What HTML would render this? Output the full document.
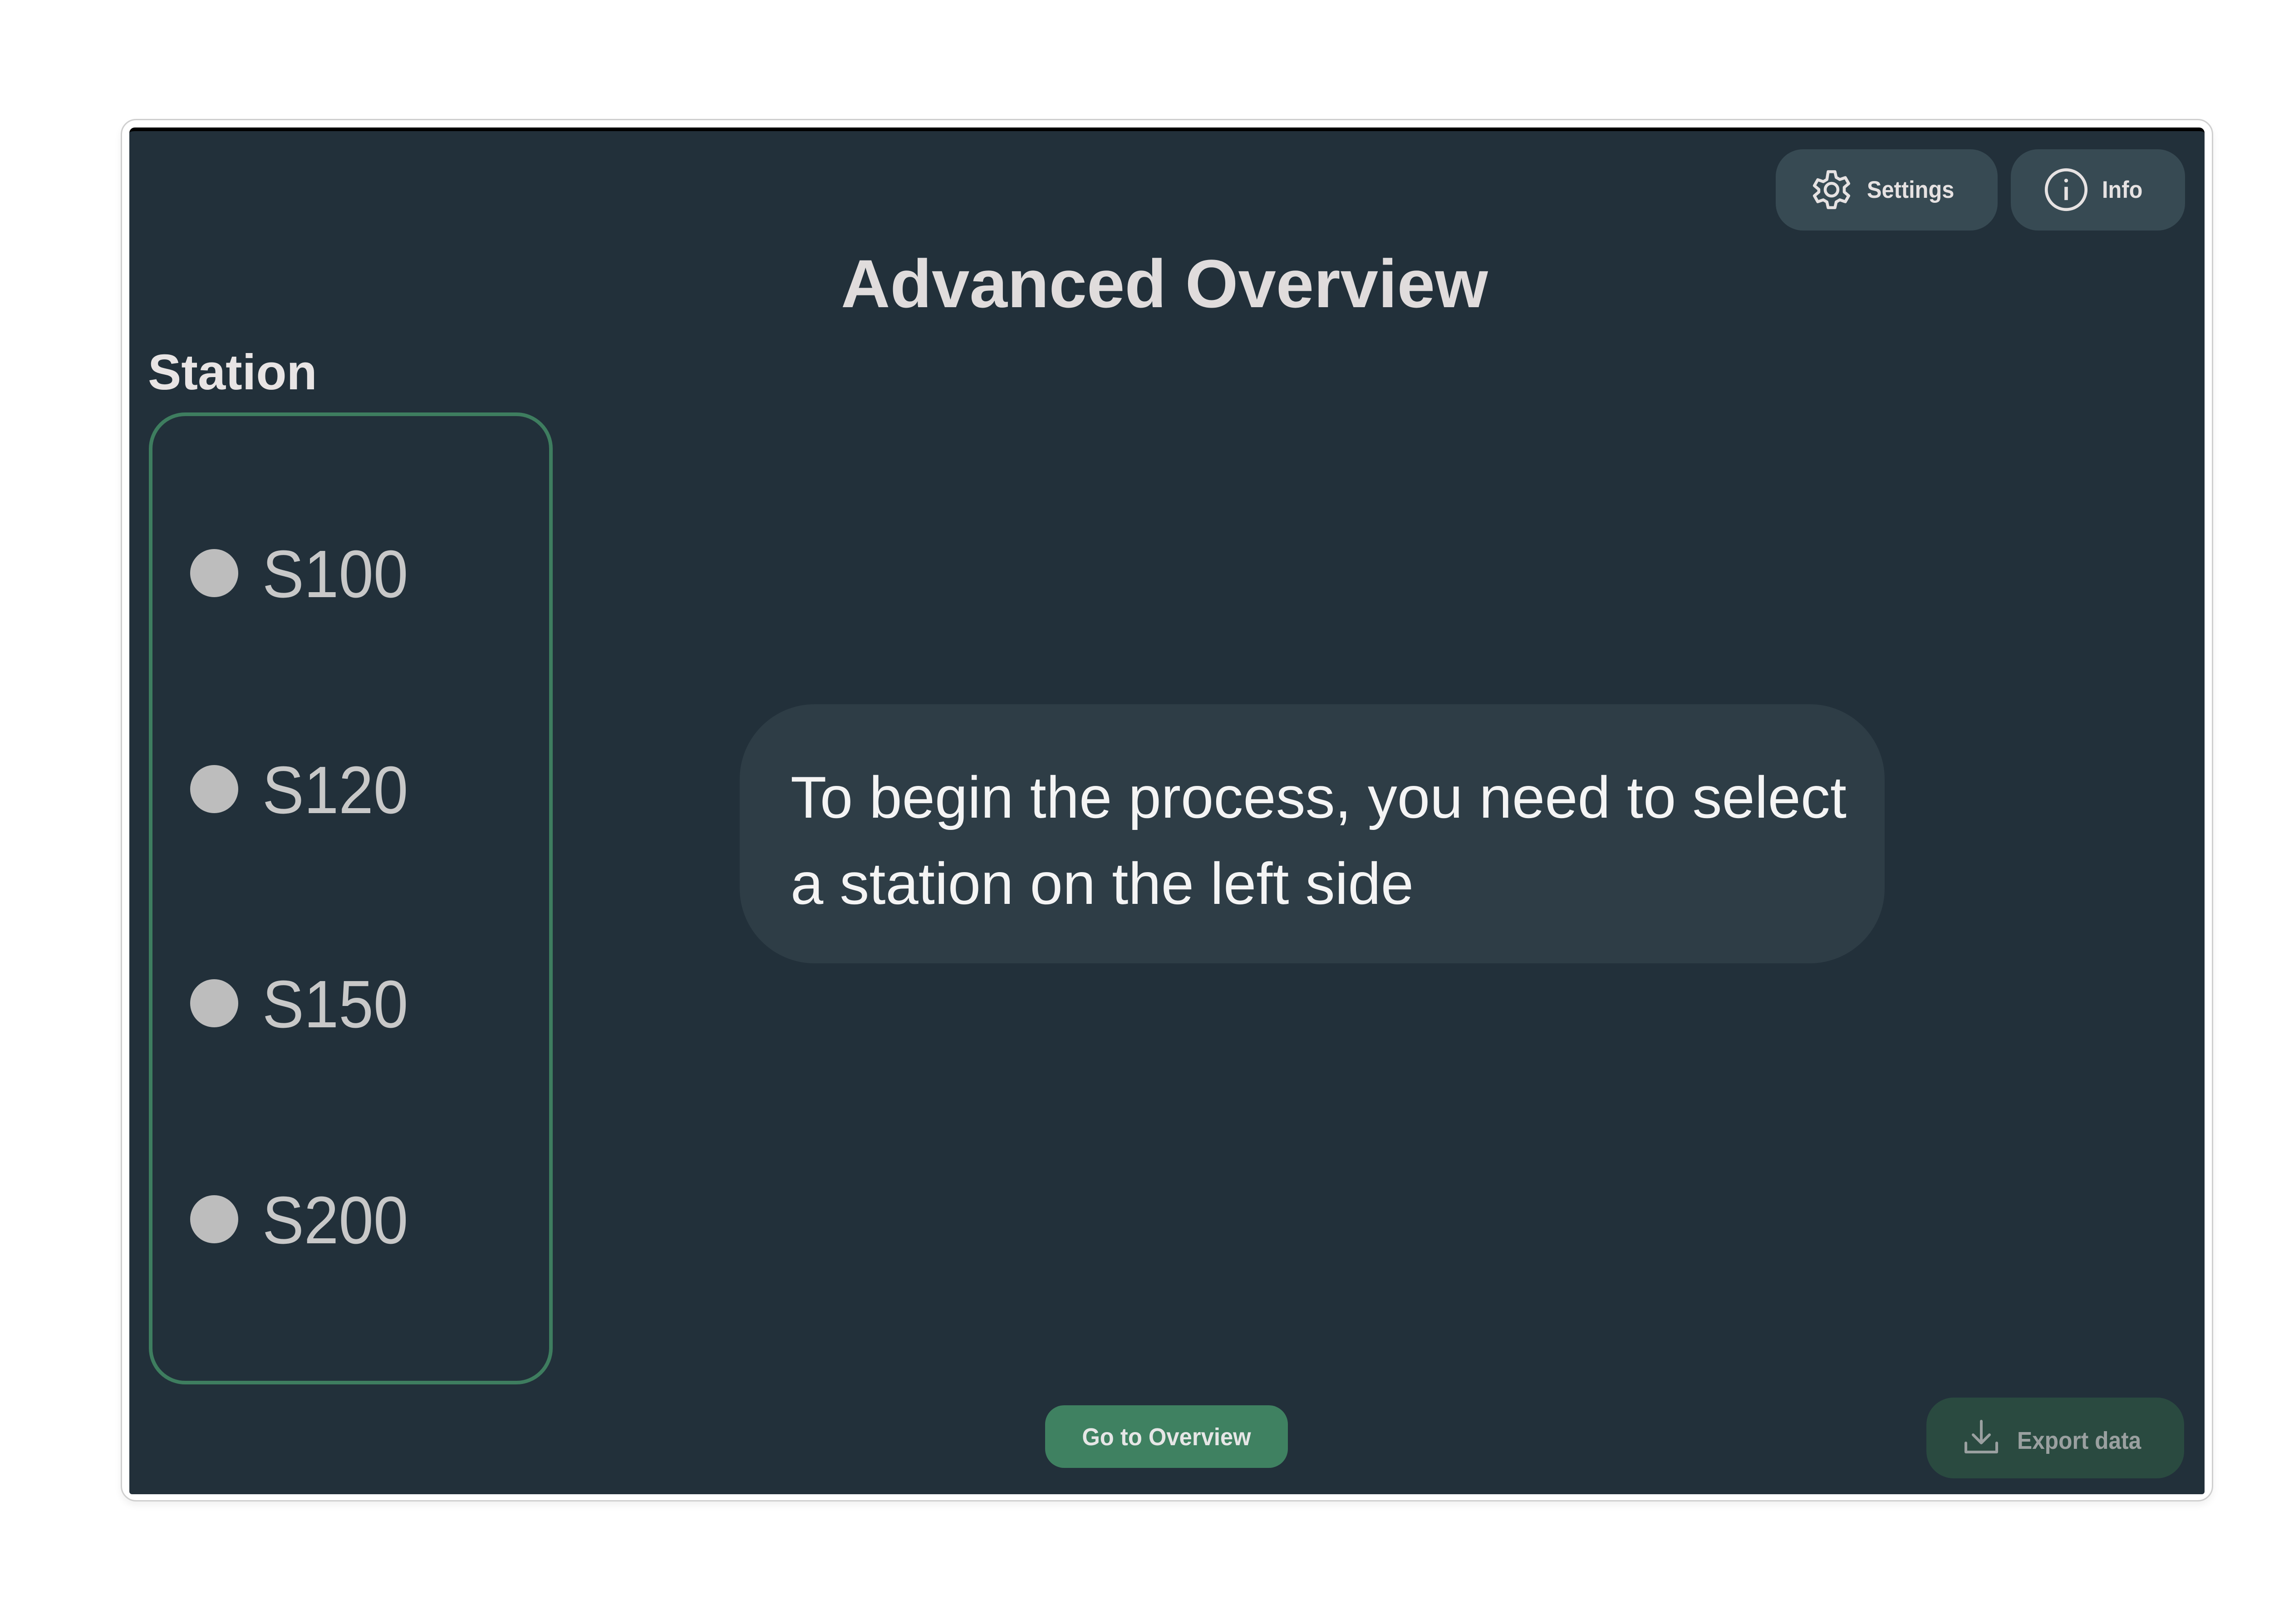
<!DOCTYPE html>
<html><head><meta charset="utf-8"><style>
*{margin:0;padding:0;box-sizing:border-box}
html,body{width:5144px;height:3579px;background:#fff;overflow:hidden;font-family:"Liberation Sans",sans-serif}
.abs{position:absolute}
#frame{left:266px;top:262px;width:4611px;height:3047px;border:3px solid #cfcfcf;border-radius:34px;box-shadow:0 8px 16px rgba(0,0,0,0.06)}
#panel{left:285px;top:281px;width:4573px;height:3012px;background:#22303a;border-top:8px solid #000;border-radius:12px 12px 6px 6px}
.btn{background:#374a53;border-radius:60px}
.t{white-space:nowrap;line-height:1}
</style></head><body>
<div id="frame" class="abs"></div>
<div id="panel" class="abs"></div>

<div class="abs btn" style="left:3913px;top:329px;width:489px;height:179px"></div>
<div class="abs btn" style="left:4431px;top:329px;width:384px;height:179px"></div>
<svg class="abs" style="left:3980px;top:362px" width="112" height="112" viewBox="0 0 24 24" fill="none" stroke="#e6e2e2" stroke-width="1.4" stroke-linejoin="round">
<path d="M10.4 1.5h3.2l.6 2.7 1.7 1 2.6-.9 1.6 2.8-2.1 1.8v2.2l2.1 1.8-1.6 2.8-2.6-.9-1.7 1-.6 2.7h-3.2l-.6-2.7-1.7-1-2.6.9-1.6-2.8 2.1-1.8V9.9L3.9 8.1l1.6-2.8 2.6.9 1.7-1z" transform="translate(0 2)"/>
<circle cx="12" cy="12" r="3"/></svg>
<div class="abs t" style="left:4114px;top:392px;font-size:53px;font-weight:bold;color:#e6e2e2;transform:scaleX(0.92);transform-origin:left">Settings</div>
<svg class="abs" style="left:4503px;top:368px" width="100" height="100" viewBox="0 0 24 24" fill="none" stroke="#e6e2e2" stroke-width="1.6">
<circle cx="12" cy="12" r="10.5"/><path d="M12 10.5v7" stroke-width="1.8"/><circle cx="12" cy="7.2" r="1" fill="#e6e2e2" stroke="none"/></svg>
<div class="abs t" style="left:4632px;top:392px;font-size:53px;font-weight:bold;color:#e6e2e2;transform:scaleX(0.92);transform-origin:left">Info</div>

<div class="abs t" style="left:0;width:5132px;text-align:center;top:550px;font-size:150px;font-weight:bold;color:#e0dcdc">Advanced Overview</div>

<div class="abs t" style="left:326px;top:766px;font-size:110px;font-weight:bold;color:#e8e4e4">Station</div>

<div class="abs" style="left:328px;top:909px;width:890px;height:2142px;border:8px solid #3e7d5f;border-radius:80px"></div>

<div class="abs" style="left:419px;top:1210px;width:106px;height:106px;border-radius:50%;background:#bdbdbd"></div>
<div class="abs t" style="left:578px;top:1192px;font-size:148px;color:#c8c8c8;transform:scaleX(0.93);transform-origin:left">S100</div>
<div class="abs" style="left:419px;top:1686px;width:106px;height:106px;border-radius:50%;background:#bdbdbd"></div>
<div class="abs t" style="left:578px;top:1668px;font-size:148px;color:#c8c8c8;transform:scaleX(0.93);transform-origin:left">S120</div>
<div class="abs" style="left:419px;top:2158px;width:106px;height:106px;border-radius:50%;background:#bdbdbd"></div>
<div class="abs t" style="left:578px;top:2140px;font-size:148px;color:#c8c8c8;transform:scaleX(0.93);transform-origin:left">S150</div>
<div class="abs" style="left:419px;top:2634px;width:106px;height:106px;border-radius:50%;background:#bdbdbd"></div>
<div class="abs t" style="left:578px;top:2616px;font-size:148px;color:#c8c8c8;transform:scaleX(0.93);transform-origin:left">S200</div>

<div class="abs" style="left:1630px;top:1552px;width:2523px;height:571px;background:#2e3d46;border-radius:165px"></div>
<div class="abs t" style="left:1742px;top:1692px;font-size:130px;color:#f4f4f4">To begin the process, you need to select</div>
<div class="abs t" style="left:1742px;top:1882px;font-size:130px;color:#f4f4f4">a station on the left side</div>

<div class="abs" style="left:2303px;top:3097px;width:535px;height:138px;background:#3f8161;border-radius:42px"></div>
<div class="abs t" style="left:2303px;width:535px;text-align:center;top:3140px;font-size:54px;font-weight:bold;color:#e6e6e6;transform:scaleX(0.94)">Go to Overview</div>

<div class="abs" style="left:4245px;top:3080px;width:568px;height:178px;background:#2a4a40;border-radius:60px"></div>
<svg class="abs" style="left:4318px;top:3120px" width="96" height="96" viewBox="0 0 24 24" fill="none" stroke="#9aa0a0" stroke-width="1.5" stroke-linecap="round" stroke-linejoin="round">
<path d="M12 3v12M7.5 10.5 12 15l4.5-4.5M3.5 15v5h17v-5"/></svg>
<div class="abs t" style="left:4445px;top:3148px;font-size:54px;font-weight:bold;color:#9aa0a0;transform:scaleX(0.92);transform-origin:left">Export data</div>
</body></html>
